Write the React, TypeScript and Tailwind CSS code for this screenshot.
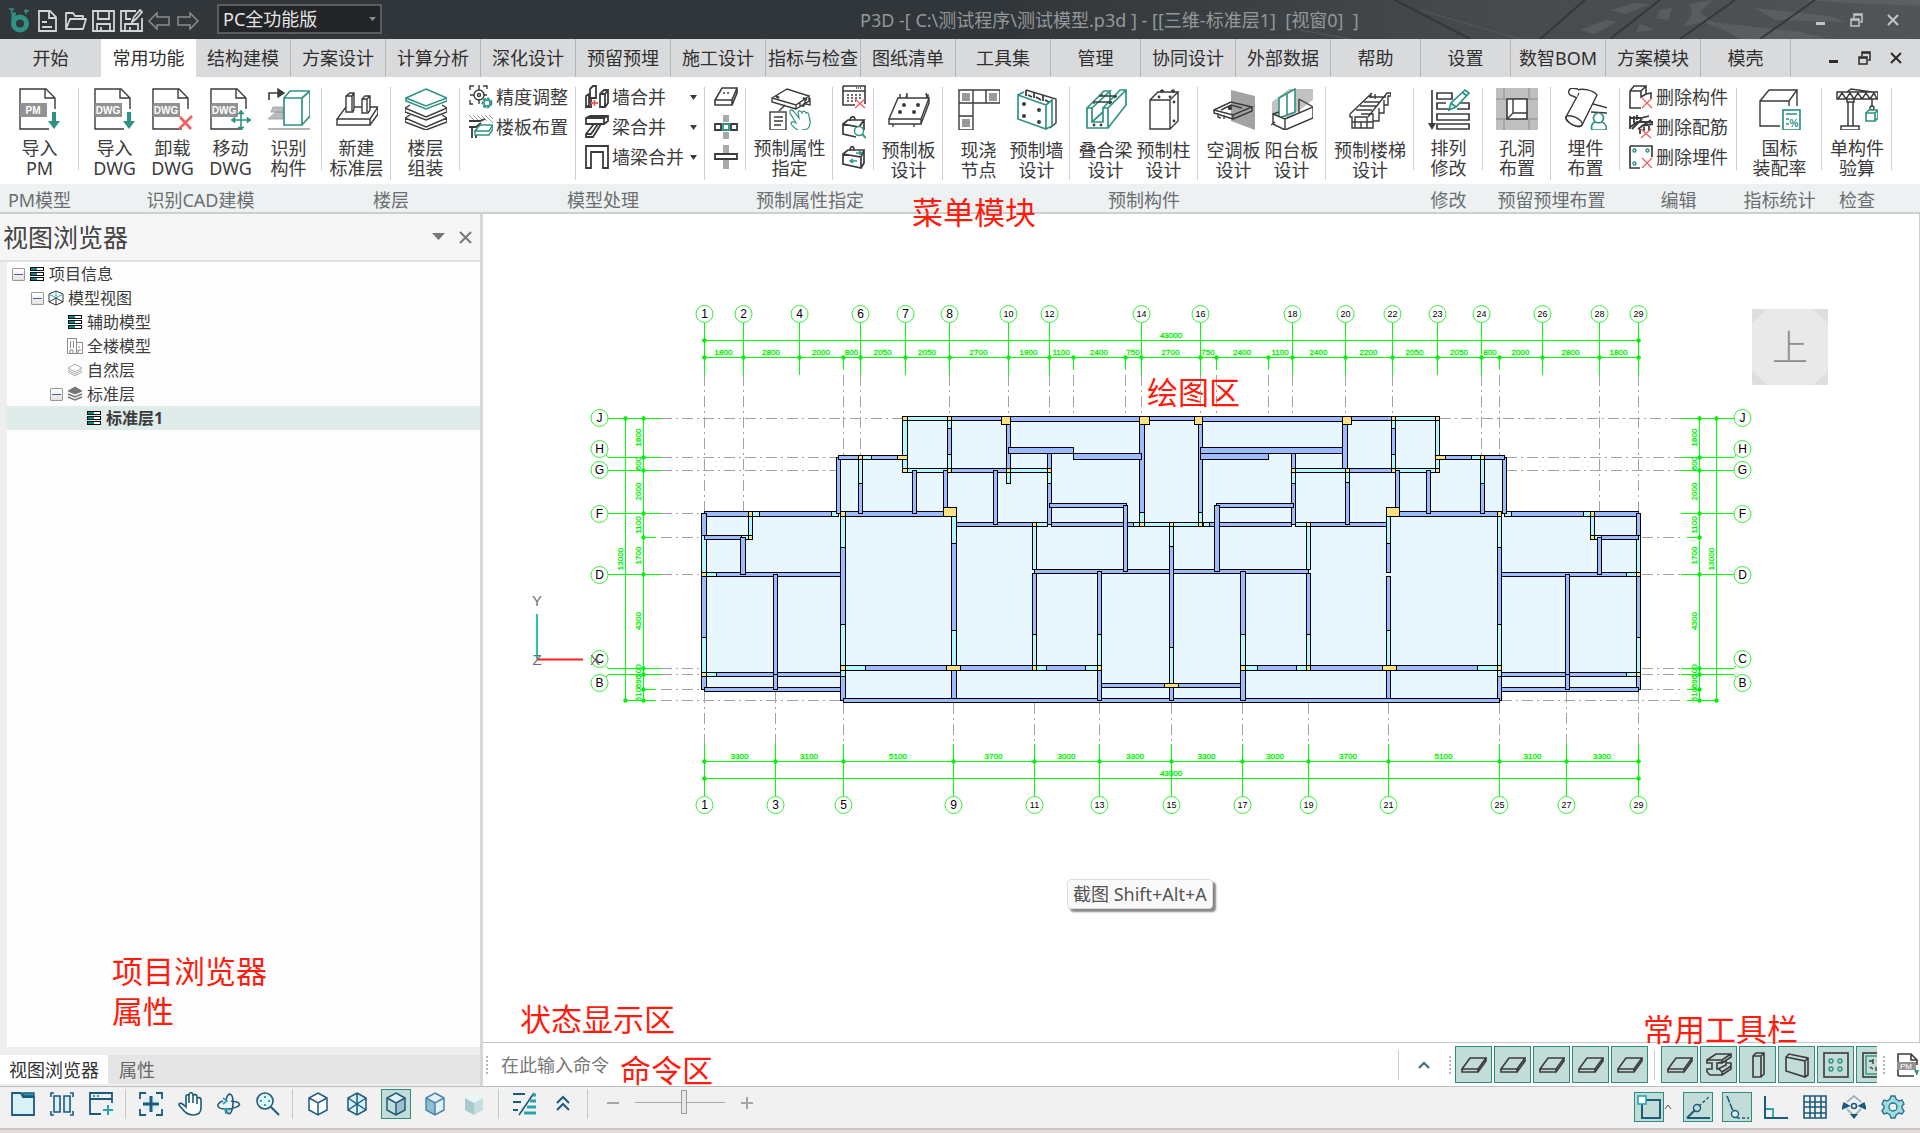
import React from "react";

const D = "#3b3b3b";
const T = "#2e9384";
const G = "#9b9b9b";
const N = "#1d5a7c";
const C = "#25a5b0";
const R = "#f0605c";

function Svg({ s = 42, children, className = "" }: { s?: number; children: React.ReactNode; className?: string }) {
  return (
    <svg width={s} height={s} viewBox={`0 0 ${s} ${s}`} fill="none" stroke={D} strokeWidth={1.4} className={`shrink-0 ${className}`} aria-hidden="true">
      {children}
    </svg>
  );
}

/* ---------- large ribbon icons, 42 x 42 ---------- */

function Doc({ tag, children }: { tag: string; children: React.ReactNode }) {
  return (
    <Svg>
      <path d="M36 21V10L27 1H1V41H30M26 1V10H36" />
      <rect x="1" y="15" width="27" height="14" fill="#929292" stroke="none" />
      <text x="14" y="26" textAnchor="middle" fontSize="10" fontWeight="700" fill="#fff" stroke="none" fontFamily="Liberation Sans, sans-serif">{tag}</text>
      {children}
    </Svg>
  );
}
const downArrow = <path d="M33 24H37V33H41L35 41L29 33H33Z" fill={T} stroke="none" />;

const big: Record<string, React.ReactNode> = {
  pm: <Doc tag="PM">{downArrow}</Doc>,
  dwgIn: <Doc tag="DWG">{downArrow}</Doc>,
  dwgOut: <Doc tag="DWG"><path d="M28 29L39 41M40 28L27 41" stroke={R} strokeWidth={2.6} /></Doc>,
  dwgMove: (
    <Doc tag="DWG">
      <g stroke={T} strokeWidth={1.6}>
        <path d="M31 23V42M22 32H41" />
        <path d="M28 26L31 22L34 26ZM28 39L31 43L34 39ZM25 29L21 32L25 35ZM37 29L41 32L37 35Z" fill={T} strokeWidth={0.6} />
      </g>
    </Doc>
  ),
  recog: (
    <Svg>
      <path d="M1 12V5H11" strokeWidth={1.6} />
      <path d="M10 1L16 5L10 9Z" fill={D} />
      <path d="M5 19H15V24H3ZM8 24H15V31H0Z" fill="#bcbcbc" stroke={G} strokeWidth={0.8} />
      <path d="M0 41H42" stroke={G} />
      <g stroke={T} strokeWidth={1.7}>
        <path d="M16 10H34V37H16ZM16 10L22 3H42V28L34 37M34 10L42 3" fill="#fff" />
      </g>
    </Svg>
  ),
  newFloor: (
    <Svg>
      <path d="M10 19H42L34 31H1ZM1 31V37H34V31M34 37L42 26V19" />
      <path d="M10 8L14 5H18V21L17 24H10ZM10 8H16V23M16 8L18 5M26 11L29 8H34V22L32 25H26ZM26 11H31V24M31 11L34 8" fill="#fff" />
    </Svg>
  ),
  floors: (
    <Svg>
      <path d="M5 27L0 30L21 39L42 30L37 27M0 30V34L21 42L42 34V30" />
      <path d="M5 17L0 20L21 29L42 20L37 17M0 20V24L21 32L42 24V20" />
      <g stroke={T} strokeWidth={1.6}>
        <path d="M21 1L42 10L21 18L1 10ZM1 10V13L21 21L42 13V10" fill="#fff" />
      </g>
    </Svg>
  ),
  assign: (
    <Svg>
      <path d="M3 10L18 1L40 8L27 17ZM3 10V14L27 21V17M27 21L40 13V8M31 14V18H35V15M36 12V16L41 17V10" />
      <path d="M7 8L10 10M34 10L38 12" strokeWidth={2.4} />
      <path d="M16 17L10 23" />
      <rect x="1" y="24" width="16" height="18" />
      <path d="M5 29H14M5 33H14M5 37H12" />
      <path d="M21 23C22 21 24 22 26 25L30 30L29 24C30 22 32 23 33 25C34 22 36 23 37 25C38 24 40 25 40 28C42 34 42 38 38 41L30 43C26 40 22 38 22 35C22 33 25 34 27 35L21 25Z" stroke={T} strokeWidth={1.2} />
    </Svg>
  ),
  slab: (
    <Svg>
      <path d="M10 10H41L33 31H1ZM1 31V36H33V31M33 36L41 15V10M12 10V6M19 10V5M40 10V6M5 36V39M26 36V39M18 10L19 6M39 10L38 5" />
      <g fill={D} stroke="none">
        <circle cx="16" cy="17" r="2" /><circle cx="30" cy="17" r="2" /><circle cx="12" cy="24" r="2" /><circle cx="26" cy="24" r="2" />
      </g>
    </Svg>
  ),
  node: (
    <Svg>
      <path d="M1 2H42V15H1ZM15 2V42H1V2M28 2V15M1 28H15" />
      <g fill="#999" stroke="none"><rect x="4" y="5" width="8" height="8" /><rect x="31" y="5" width="8" height="8" /><rect x="4" y="31" width="8" height="8" /></g>
    </Svg>
  ),
  wall: (
    <Svg>
      <path d="M10 2L40 11V35L34 40" />
      <path d="M10 2V8M18 4V10M27 7V13M12 7L16 9M20 9L25 12M29 12L33 14" strokeWidth={1.8} />
      <path d="M2 7L30 17V41L2 31ZM2 7L8 4M30 17L36 12V38L30 41" stroke={T} strokeWidth={1.7} />
      <g fill={D} stroke="none"><circle cx="8" cy="16" r="2" /><circle cx="8" cy="28" r="2" /><circle cx="23" cy="22" r="2" /><circle cx="23" cy="34" r="2" /></g>
    </Svg>
  ),
  beam: (
    <Svg>
      <g stroke={T} strokeWidth={1.7}>
        <path d="M2 20H7V34H18V20H23V40H2ZM2 20L19 3H25L7 20M18 20L35 2H41L23 20M41 2V17L23 40M25 3V16M7 34L18 24" />
      </g>
      <path d="M14 8H32M17 8V6M10 14H27M9 16V13M29 10L32 8M24 16L27 14" />
      <g fill={D} stroke="none"><circle cx="9" cy="37" r="1.4" /><circle cx="16" cy="37" r="1.4" /></g>
    </Svg>
  ),
  column: (
    <Svg>
      <path d="M7 12H27V41H7ZM7 12L15 4H35L27 12M35 4V33L27 41M19 5V1M30 5V1M17 3H21M28 3H32" />
      <g fill={D} stroke="none"><circle cx="16" cy="9" r="1.4" /><circle cx="27" cy="9" r="1.4" /><circle cx="31" cy="14" r="1.4" /><circle cx="31" cy="33" r="1.4" /></g>
    </Svg>
  ),
  acSlab: (
    <Svg>
      <path d="M18 2L42 8V42L18 33Z" fill="#a3a3a3" stroke="none" />
      <path d="M1 22L18 14L39 19L20 27ZM1 22V25L20 31V27M20 31L39 23V19M5 25V29L8 30M11 27V31M8 22L18 17L29 20" />
      <circle cx="17" cy="20" r="1.5" fill={D} />
    </Svg>
  ),
  balcony: (
    <Svg>
      <path d="M1 14L18 1H42V12L18 30L1 26Z" fill="#c2c2c2" stroke="none" />
      <path d="M8 10L24 1V24L8 30ZM16 6V27" fill="#fff" stroke={T} strokeWidth={1.6} />
      <path d="M2 26L14 31V42L2 36ZM14 31L42 19V30L14 42M28 11L42 19M28 11V25M2 26L8 24M0 37L4 34" fill="#fff" />
    </Svg>
  ),
  stairs: (
    <Svg>
      <path d="M1 26L23 5M1 26V29H3V40H24V33H30V25H35V17H39V8H42V5H38L19 29M7 22H23M11 18H27M15 14H31M20 9H37M22 5V10M26 6V11M3 34H18V29H6V40M12 34V40M18 34V40M18 34H24M24 33V26H12M30 25V20M35 17V12" />
    </Svg>
  ),
  arrange: (
    <Svg>
      <path d="M4 2V38" strokeWidth={1.7} /><path d="M0 35H8L4 42Z" fill={D} stroke="none" />
      <path d="M9 5H24V11H9ZM18 15H9V21H21M32 15H41V21H29M9 26H41V32H9ZM9 36H41V41H9Z" strokeWidth={1.7} />
      <path d="M21 22L23 15L37 2L41 5L28 19ZM34 4L39 8M23 15L28 19" fill="#fff" stroke={T} strokeWidth={1.7} />
    </Svg>
  ),
  hole: (
    <Svg>
      <path d="M0 0H42V42H0Z" fill="#bfbfbf" stroke="none" />
      <path d="M0 11H42M0 31H42M8 0V11M33 0V11M8 31V42M33 31V42" stroke="#8c8c8c" strokeWidth={1} />
      <path d="M11 11H31V31H11Z" fill="#fff" strokeWidth={1.6} /><path d="M17 11V25L11 31M17 25H31" />
    </Svg>
  ),
  embed: (
    <Svg>
      <path d="M28 16L43 20V25L26 24" fill="#fff" />
      <path d="M12 2C18 0 28 2 32 7L17 37C13 42 1 34 1 29L14 5" fill="#fff" /><ellipse cx="9" cy="33" rx="9" ry="4" transform="rotate(25 9 33)" />
      <path d="M13 1L7 0C3 1 3 5 5 7L12 10" fill="#fff" />
      <path d="M34 25A5 5 0 1 1 33 25M30 34C26 36 26 39 27 42H41C42 39 41 36 37 34" fill="#fff" stroke={T} strokeWidth={1.7} />
    </Svg>
  ),
  national: (
    <Svg>
      <path d="M1 13L10 2H38L30 13H1V38H21M30 13V18M38 2V18" />
      <rect x="24" y="22" width="17" height="20" stroke={T} strokeWidth={1.7} fill="#fff" />
      <path d="M27 26H38M27 31H30M27 36H30" stroke={T} />
      <text x="35" y="39" fontSize="10" fontWeight="700" textAnchor="middle" fill={T} stroke="none" fontFamily="Liberation Sans, sans-serif">%</text>
    </Svg>
  ),
  crane: (
    <Svg>
      <path d="M1 4H42V11H1ZM11 4L15 1L36 4M2 11L6 5L10 11L14 5L18 11L22 5L26 11L30 5L34 11L38 5L41 11M11 11V14H18V11M12 14V38M17 14V38M5 38H23V42H5ZM36 11V19" strokeWidth={1.5} />
      <circle cx="36" cy="20" r="2" />
      <path d="M30 25H39V33H30ZM30 25L33 22H42V30L39 33M39 25L42 22" fill="#fff" stroke={T} strokeWidth={1.7} />
    </Svg>
  ),
};

/* ---------- small ribbon icons, 24 x 24 ---------- */

const slabPath = "M8 3H23L18 15H1ZM1 15V20H18V15M18 20L23 8V3";
const small: Record<string, React.ReactNode> = {
  precision: (
    <Svg s={24}>
      <path d="M1 5V1H5M14 1H18V4M1 15V19H4M10 0V5M10 14V19M1 10H5M15 10H18" />
      <circle cx="10" cy="10" r="5" /><circle cx="10" cy="10" r="1.5" />
      <circle cx="18" cy="18" r="4.4" stroke={T} strokeWidth={2} fill="#fff" strokeDasharray="3 1" /><circle cx="18" cy="18" r="3" stroke={T} />
    </Svg>
  ),
  floorSlab: (
    <Svg s={24}>
      <path d="M0 0L5 5M4 0L9 5M8 0L13 5M12 0L18 6M16 0L24 8M20 0L24 4" stroke={G} strokeWidth={1} />
      <path d="M0 6H11L16 4M0 12H3V23M7 14V23M3 12H7L12 8" strokeWidth={1.8} />
      <path d="M11 10H24L20 16H6ZM6 16V20H20L24 14V10" stroke={T} fill="#fff" />
    </Svg>
  ),
  wallMerge: (
    <Svg s={24}>
      <path d="M5 4L8 1H11V13H5ZM1 11L4 9V20L1 22ZM1 11V22H6V13M15 9L19 5H23V18L20 22H15ZM15 9H20V22M20 9L23 5" strokeWidth={1.8} />
      <path d="M6 18H13M9.500 15V21" stroke={R} strokeWidth={1.8} />
    </Svg>
  ),
  beamMerge: (
    <Svg s={24}>
      <path d="M1 3L5 1H23V6L19 9H16L8 22H1V19L9 9H1ZM1 3H19L23 1M19 3V9M9 9H16M1 19H6L13 9" strokeWidth={1.8} />
    </Svg>
  ),
  wallBeam: <Svg s={24}><path d="M1 1H23V23H18V7H6V23H1Z" strokeWidth={1.8} /></Svg>,
  s1: <Svg s={24}><path d={slabPath} strokeWidth={1.6} /><path d="M9 8H17" strokeDasharray="2 2" /></Svg>,
  s2: (
    <Svg s={24}>
      <path d="M9 0H15V7H9ZM9 17H15V24H9Z" fill="#aaa" stroke="none" />
      <path d="M1 9H7V15H1ZM17 9H23V15H17Z" strokeWidth={1.8} /><path d="M9 9H15V15H9Z" stroke={T} strokeWidth={1.8} />
    </Svg>
  ),
  s3: <Svg s={24}><path d="M9 0H15V24H9Z" fill="#aaa" stroke="none" /><path d="M1 9H23V14H1Z" fill="#fff" strokeWidth={1.8} /></Svg>,
  calX: (
    <Svg s={24}>
      <path d="M1 1H23V19M1 1V20H13M1 6H23" strokeWidth={1.6} />
      <path d="M5 10H20M5 13H20M5 16H14" strokeDasharray="2 2" /><path d="M14 3H20" strokeDasharray="1 1" />
      <path d="M13 14L23 23M23 14L13 23" stroke={R} strokeWidth={1.4} />
    </Svg>
  ),
  boxFind: (
    <Svg s={24}>
      <path d="M1 9L6 5H22L17 12ZM1 9V19L14 22M1 9L17 12M22 5V15M8 6C8 1 13 0 13 5" strokeWidth={1.7} />
      <circle cx="17" cy="16" r="4.500" stroke={T} fill="#fff" /><path d="M20 19L24 23" stroke={T} strokeWidth={1.8} />
    </Svg>
  ),
  boxSwap: (
    <Svg s={24}>
      <path d="M1 9L6 5H22L19 12ZM1 9V19L19 23V12M22 5V18L19 23M8 6C8 1 12 0 12 5" strokeWidth={1.7} />
      <path d="M14 8H20M8 16H15M17 6L20 8L17 10M11 14L8 16L11 18" stroke={T} />
    </Svg>
  ),
  delPart: (
    <Svg s={24}>
      <path d="M1 6L5 1H17V9L22 8V14M1 6H12L17 1M12 6V12L17 9M1 6V23H12" strokeWidth={1.6} />
      <path d="M13 13L23 23M23 13L13 23" stroke={R} strokeWidth={1.3} />
    </Svg>
  ),
  delRebar: (
    <Svg s={24}>
      <path d="M0 13L8 7H24M3 14L13 4M9 14L22 5M12 11L24 9M1 1V14M5 1V8M8 0V5M1 3H12L20 1M11 14V19M15 12V16M20 11V16" strokeWidth={1.8} />
      <path d="M12 14L22 23M22 14L12 23" stroke={R} strokeWidth={1.3} />
    </Svg>
  ),
  delEmbed: (
    <Svg s={24}>
      <path d="M1 1H23V12M1 1V23H11" strokeWidth={1.7} />
      <g stroke={T}><circle cx="5.500" cy="5.500" r="1.500" /><circle cx="18.500" cy="5.500" r="1.500" /><circle cx="5.500" cy="18.500" r="1.500" /></g>
      <path d="M13 13L23 23M23 13L13 23" stroke={R} strokeWidth={1.3} />
    </Svg>
  ),
};

/* ---------- ribbon ---------- */

function Big({ icon, a, b, w, low }: { icon: string; a: string; b: string; w: string; low?: boolean }) {
  return (
    <button type="button" className={`flex h-full flex-col items-center pt-[11px] pl-px ${w} ${low ? "gap-2.5" : "gap-2"}`}>
      {big[icon]}
      <span className="flex flex-col whitespace-nowrap text-center text-lg leading-5"><span>{a}</span><span>{b}</span></span>
    </button>
  );
}

function Small({ icon, label, menu }: { icon: string; label?: string; menu?: boolean }) {
  return (
    <button type="button" aria-label={label ?? icon} className="flex h-[30px] w-full items-center gap-[3px] text-lg leading-6">
      {small[icon]}
      {label && <span className="whitespace-nowrap">{label}</span>}
      {menu && <svg width="7" height="5" className="ml-auto" aria-hidden="true"><path d="M0 0H7L3.500 5Z" fill={D} /></svg>}
    </button>
  );
}

const Stack = ({ w, children }: { w: string; children: React.ReactNode }) => (
  <div className={`flex flex-col pt-[5px] pl-[9px] ${w}`}>{children}</div>
);
const Sep = () => <div className="mt-[11px] h-[82px] w-px bg-[#cfcfcf]" />;
const SepTall = () => <div className="mt-[10px] h-[93px] w-px bg-[#cfcfcf]" />;

function Group({ label, children }: { label: string; children: React.ReactNode }) {
  return (
    <section aria-label={label} className="flex shrink-0 flex-col">
      <div className="flex h-[107px]">{children}</div>
      <div className="flex h-7 items-center justify-center bg-[#edf1f2] pt-1 text-lg leading-6 text-[#6b6e70]">{label}</div>
    </section>
  );
}

function Ribbon() {
  return (
    <div className="flex overflow-hidden border-b-2 border-[#cdd0d0] bg-white text-[#3b3b3b]">
      <Group label="PM模型"><Big icon="pm" a="导入" b="PM" w="w-[78px]" /><Sep /></Group>
      <Group label="识别CAD建模">
        <div className="flex pr-1 pl-1.5">
          <Big icon="dwgIn" a="导入" b="DWG" w="w-[58px]" />
          <Big icon="dwgOut" a="卸载" b="DWG" w="w-[58px]" />
          <Big icon="dwgMove" a="移动" b="DWG" w="w-[58px]" />
          <Big icon="recog" a="识别" b="构件" w="w-[58px]" />
        </div>
        <Sep />
      </Group>
      <Group label="楼层">
        <Big icon="newFloor" a="新建" b="标准层" w="w-[68px]" /><SepTall />
        <Big icon="floors" a="楼层" b="组装" w="w-[68px]" /><Sep />
      </Group>
      <Group label="模型处理">
        <Stack w="w-[115px]"><Small icon="precision" label="精度调整" /><Small icon="floorSlab" label="楼板布置" /></Stack>
        <SepTall />
        <Stack w="w-[128px] pr-[7px]"><Small icon="wallMerge" label="墙合并" menu /><Small icon="beamMerge" label="梁合并" menu /><Small icon="wallBeam" label="墙梁合并" menu /></Stack>
        <SepTall />
        <Stack w="w-[40px]"><Small icon="s1" /><Small icon="s2" /><Small icon="s3" /></Stack>
        <Sep />
      </Group>
      <Group label="预制属性指定">
        <Big icon="assign" a="预制属性" b="指定" w="w-[86px]" /><SepTall />
        <Stack w="w-[40px]"><Small icon="calX" /><Small icon="boxFind" /><Small icon="boxSwap" /></Stack>
        <Sep />
      </Group>
      <Group label="预制构件">
        <Big icon="slab" a="预制板" b="设计" w="w-[68px]" low /><SepTall />
        <div className="flex pr-1 pl-1.5">
          <Big icon="node" a="现浇" b="节点" w="w-[58px]" low /><Big icon="wall" a="预制墙" b="设计" w="w-[58px]" low />
        </div>
        <SepTall />
        <div className="flex pr-[5px] pl-1.5">
          <Big icon="beam" a="叠合梁" b="设计" w="w-[58px]" low /><Big icon="column" a="预制柱" b="设计" w="w-[58px]" low />
        </div>
        <SepTall />
        <div className="flex pr-[5px] pl-1.5">
          <Big icon="acSlab" a="空调板" b="设计" w="w-[58px]" low /><Big icon="balcony" a="阳台板" b="设计" w="w-[58px]" low />
        </div>
        <SepTall />
        <Big icon="stairs" a="预制楼梯" b="设计" w="w-[87px]" low /><Sep />
      </Group>
      <Group label="修改"><Big icon="arrange" a="排列" b="修改" w="w-[68px]" /><Sep /></Group>
      <Group label="预留预埋布置">
        <Big icon="hole" a="孔洞" b="布置" w="w-[67px]" /><SepTall />
        <Big icon="embed" a="埋件" b="布置" w="w-[68px]" /><Sep />
      </Group>
      <Group label="编辑">
        <Stack w="w-[116px]"><Small icon="delPart" label="删除构件" /><Small icon="delRebar" label="删除配筋" /><Small icon="delEmbed" label="删除埋件" /></Stack>
        <Sep />
      </Group>
      <Group label="指标统计"><Big icon="national" a="国标" b="装配率" w="w-[84px]" /><Sep /></Group>
      <Group label="检查"><Big icon="crane" a="单构件" b="验算" w="w-[69px]" /><Sep /></Group>
      <div className="flex flex-1 flex-col justify-end"><div className="h-7 bg-[#edf1f2]" /></div>
    </div>
  );
}

/* ---------- title bar and tabs ---------- */

function WindowButtons({ color, className }: { color: string; className: string }) {
  return (
    <div className={`flex items-center ${className}`}>
      <button type="button" aria-label="最小化"><svg width="14" height="14" aria-hidden="true"><path d="M2 9H11V12H2Z" fill={color} /></svg></button>
      <button type="button" aria-label="还原">
        <svg width="14" height="14" fill="none" stroke={color} strokeWidth="1.500" aria-hidden="true"><path d="M1 6H9V13H1ZM4 5V1H12V9H10M1 7H9M4 2H12" /></svg>
      </button>
      <button type="button" aria-label="关闭"><svg width="14" height="14" stroke={color} strokeWidth="2" aria-hidden="true"><path d="M2 2L12 12M12 2L2 12" /></svg></button>
    </div>
  );
}

function TitleBar() {
  const l = "#d3d5d6";
  return (
    <header className="relative flex h-[39px] shrink-0 items-center bg-[#31363a]">
      <div className="absolute inset-y-0 right-0 w-[920px] overflow-hidden bg-linear-to-r from-[#31363a] via-[#45494c] via-50% to-[#515558]">
        <svg width="920" height="39" aria-hidden="true">
          <g fill="#65696c" opacity=".55">
            <path d="M755 8L830 16L845 22L775 20Z" /><path d="M710 22L800 32L830 39H740Z" />
            <path d="M660 10L672 8L668 20L656 18Z" /><path d="M690 4L712 0L700 12L722 30L704 22L684 26L692 14Z" />
            <path d="M610 10L636 3L650 4L625 14Z" /><path d="M580 30L606 20L616 22L595 34Z" /><path d="M805 0H920V6L850 3Z" /><path d="M640 24L655 30L636 32Z" />
          </g>
          <g stroke="#34383b" strokeWidth="2" fill="none"><path d="M540 39L585 0M610 39L660 0M680 39L735 0M760 39L815 0M395 0L470 39" /></g>
          <path d="M300 30L350 39M420 10L520 39" stroke="#54585b" />
        </svg>
      </div>
      <div className="relative flex items-center pl-2 pt-[3px]">
        <svg width="24" height="26" fill="none" aria-hidden="true">
          <circle cx="12" cy="15.500" r="6.500" stroke={T} strokeWidth="5" /><path d="M5 14V6H8" stroke={T} strokeWidth="3" /><path d="M1 1H5L3 5M18 1V6M16 3H21" stroke={T} strokeWidth="1.500" />
        </svg>
        <div className="ml-1 flex gap-1">
          <button type="button" aria-label="新建"><Svg s={24}><path d="M3 2H14L20 8V22H3ZM13 2V9H20M6 13H11M6 18H16" stroke={l} strokeWidth={1.8} /></Svg></button>
          <button type="button" aria-label="打开"><Svg s={24}><path d="M2 20V4H9L11 7H19V10M2 20L6 10H22L19 20Z" stroke={l} strokeWidth={1.8} strokeLinejoin="round" /></Svg></button>
          <button type="button" aria-label="保存"><Svg s={24}><path d="M1 2H22V22H1ZM6 2V10H17V2M5 22V15H18V22M9 18V22" stroke={l} strokeWidth={1.8} /></Svg></button>
          <button type="button" aria-label="另存为"><Svg s={24}><path d="M16 2H1V22H22V9M6 2V10H11M5 22V15H18V22M10 18V22M12 13L14 8L20 1L22 3L16 10Z" stroke={l} strokeWidth={1.8} /></Svg></button>
          <button type="button" aria-label="撤销"><Svg s={24}><path d="M1 12L9 4V8H21V16H9V20Z" stroke="#8b8f91" strokeWidth={1.5} /></Svg></button>
          <button type="button" aria-label="重做"><Svg s={24}><path d="M22 12L14 4V8H2V16H14V20Z" stroke="#8b8f91" strokeWidth={1.5} /></Svg></button>
        </div>
      </div>
      <div className="relative -mt-0.5 ml-[17px] h-[30px] w-[165px]">
        <select aria-label="版本" className="h-full w-full appearance-none border-2 border-[#5a5d60] bg-[#232527] pl-1 text-lg leading-6 text-[#e3e4e5]"><option>PC全功能版</option></select>
        <svg width="7" height="5" className="pointer-events-none absolute top-[13px] right-[6px]" aria-hidden="true"><path d="M0 0H7L3.500 4Z" fill="#8a8d8f" /></svg>
      </div>
      <h1 className="relative ml-[478px] whitespace-pre text-lg leading-6 text-[#94989a]">P3D -[ C:\测试程序\测试模型.p3d ] - [[三维-标准层1]  [视窗0]  ]</h1>
      <WindowButtons color="#c3c5c6" className="relative ml-auto gap-[22px] pr-5" />
    </header>
  );
}

const tabs: [string, string][] = [
  ["开始", "w-[101px]"], ["常用功能", "w-[95px]"], ["结构建模", "w-[95px]"], ["方案设计", "w-[95px]"], ["计算分析", "w-[95px]"],
  ["深化设计", "w-[95px]"], ["预留预埋", "w-[95px]"], ["施工设计", "w-[95px]"], ["指标与检查", "w-[95px]"], ["图纸清单", "w-[95px]"],
  ["工具集", "w-[95px]"], ["管理", "w-[90px]"], ["协同设计", "w-[95px]"], ["外部数据", "w-[95px]"], ["帮助", "w-[90px]"],
  ["设置", "w-[90px]"], ["数智BOM", "w-[95px]"], ["方案模块", "w-[95px]"], ["模壳", "w-[90px]"],
];

function TabBar() {
  return (
    <nav className="flex h-[38px] shrink-0 bg-[#d9dadc] text-[#2f2f2f]">
      <div role="tablist" className="flex">
        {tabs.map(([t, w], i) => (
          <button key={t} type="button" role="tab" aria-selected={i === 1}
            className={`flex shrink-0 items-center justify-center overflow-hidden whitespace-nowrap text-lg leading-6 ${w} ${i === 1 ? "bg-white" : i > 1 ? "border-r border-[#b5b6b8]" : ""}`}>
            {t}
          </button>
        ))}
      </div>
      <WindowButtons color="#2b2b2b" className="ml-auto gap-[17px] pr-[17px]" />
    </nav>
  );
}

/* ---------- project browser ---------- */

const ListIcon = () => (
  <svg width="16" height="16" aria-hidden="true">
    {[1, 6, 11].map((y) => (<g key={y}><rect x="1" y={y} width="14" height="4" fill="#111" /><rect x="2" y={y + 1} width="6" height="2" fill="#0c8a86" /><rect x="8" y={y + 1} width="6" height="2" fill="#fff" /></g>))}
  </svg>
);
const treeIcons: Record<string, React.ReactNode> = {
  list: <ListIcon />,
  cube: <svg width="16" height="16" fill="none" stroke="#333" aria-hidden="true"><path d="M8 1L15 4V12L8 15L1 12V4ZM8 8V15M1 12L8 8L15 12" /><path d="M1 4L8 8L15 4M8 1V8" stroke="#2aa5a0" /></svg>,
  build: <svg width="16" height="16" fill="none" stroke="#8a8a8a" aria-hidden="true"><path d="M.5 15.500V.5H9.500V15.500M9.500 4.500H15.500V15.500H.5M3.500 3V10M6.500 3V10M12 8V10M3 15V12H6V15M11 15V12H14" /></svg>,
  layers: <svg width="16" height="16" fill="none" stroke="#aaa" aria-hidden="true"><path d="M8 2L15 6L8 10L1 6ZM1 8L8 12L15 8M1 10L8 14L15 10" /></svg>,
  layersSolid: <svg width="16" height="16" fill="none" stroke="#777" aria-hidden="true"><path d="M8 1L15 5L8 8L1 5Z" fill="#777" /><path d="M1 8L8 11L15 8M1 11L8 14L15 11" strokeWidth="1.500" /></svg>,
};
const tree: { t: string; icon: string; open?: boolean; pad: string; sel?: boolean }[] = [
  { t: "项目信息", icon: "list", open: true, pad: "pl-[5px]" },
  { t: "模型视图", icon: "cube", open: true, pad: "pl-6" },
  { t: "辅助模型", icon: "list", pad: "pl-[60px]" },
  { t: "全楼模型", icon: "build", pad: "pl-[60px]" },
  { t: "自然层", icon: "layers", pad: "pl-[60px]" },
  { t: "标准层", icon: "layersSolid", open: true, pad: "pl-[43px]" },
  { t: "标准层1", icon: "list", pad: "pl-[79px]", sel: true },
];

function Browser() {
  return (
    <aside className="flex w-[480px] shrink-0 flex-col bg-[#eeeeee]">
      <div className="flex h-[46px] items-center bg-[#f6f6f6] pr-[7px] pl-[3px]">
        <h2 className="text-[25px] leading-8 text-[#444]">视图浏览器</h2>
        <button type="button" aria-label="菜单" className="ml-auto"><svg width="13" height="8" aria-hidden="true"><path d="M0 0H13L6.500 7Z" fill="#777" /></svg></button>
        <button type="button" aria-label="关闭" className="ml-[14px]"><svg width="14" height="14" stroke="#777" strokeWidth="2" aria-hidden="true"><path d="M1 2L12 13M12 2L1 13" /></svg></button>
      </div>
      <div className="h-0.5 bg-[#e0e0e0]" />
      <div className="relative ml-[7px] flex-1 bg-[#fdfdfd]">
        <ul role="tree" className="text-base leading-6 text-[#3c3c3c]">
          {tree.map((n) => (
            <li key={n.t} role="treeitem" aria-selected={!!n.sel} className={`flex h-6 items-center ${n.pad} ${n.sel ? "bg-[#dfece9] font-bold" : ""}`}>
              {n.open && (
                <button type="button" aria-label="折叠" className="mr-1 flex size-[13px] items-center justify-center rounded-[1px] border border-[#999] bg-linear-to-b from-white to-[#e2e2e2]"><span className="h-px w-[9px] bg-[#4560a8]" /></button>
              )}
              {treeIcons[n.icon]}
              <span className="ml-1">{n.t}</span>
            </li>
          ))}
        </ul>
        <p className="absolute bottom-4 left-[105px] text-[31px] leading-10 text-[#ff1c0e]">项目浏览器<br />属性</p>
      </div>
      <div role="tablist" className="mt-2 mb-0.5 flex h-[29px] bg-[#e5e5e5] text-lg leading-6">
        <button type="button" role="tab" aria-selected="true" className="w-[108px] bg-white text-[#333]">视图浏览器</button>
        <button type="button" role="tab" aria-selected="false" className="w-[58px] text-[#666]">属性</button>
      </div>
    </aside>
  );
}

/* ---------- floor plan ---------- */

type Seg = [number, number, number, number, "b" | "c" | "y"];
const colors = { b: "#9dbbff", c: "#b0f7ff", y: "#ffe182" };

const side: Seg[] = [
  [704, 511, 748, 516, "b"], [748, 511, 752, 516, "y"], [752, 511, 759, 516, "c"], [759, 511, 831, 516, "b"], [831, 511, 838, 516, "c"],
  [701, 513, 706, 535, "b"], [701, 535, 706, 572, "c"], [701, 576, 706, 637, "b"], [701, 637, 706, 672, "c"], [701, 676, 706, 689, "b"],
  [701, 572, 706, 576, "y"], [701, 672, 706, 676, "y"],
  [704, 535, 741, 539, "b"], [741, 535, 748, 539, "c"], [748, 535, 752, 539, "y"], [748, 516, 752, 535, "c"],
  [706, 572, 716, 576, "c"], [716, 572, 843, 576, "b"], [740, 537, 745, 574, "b"],
  [706, 672, 716, 676, "c"], [716, 672, 843, 676, "b"], [704, 687, 843, 691, "b"],
  [773, 574, 777, 675, "b"], [773, 674, 777, 689, "b"],
  [840, 511, 845, 516, "y"], [840, 516, 845, 547, "c"], [840, 547, 845, 624, "b"], [840, 624, 845, 665, "c"], [840, 665, 845, 670, "y"], [840, 670, 845, 676, "c"], [840, 676, 845, 700, "b"],
  [845, 511, 943, 516, "b"], [836, 457, 840, 513, "b"],
  [838, 455, 858, 459, "b"], [858, 455, 862, 459, "y"], [862, 455, 871, 459, "c"], [871, 455, 897, 459, "b"],
  [858, 459, 862, 483, "c"], [858, 483, 862, 513, "b"],
  [902, 420, 907, 468, "c"], [897, 455, 907, 459, "y"], [902, 416, 907, 420, "y"], [902, 468, 907, 472, "y"],
  [907, 416, 947, 420, "c"], [947, 416, 951, 420, "y"], [947, 420, 951, 428, "c"], [947, 428, 951, 454, "b"], [947, 454, 951, 468, "c"], [947, 468, 951, 472, "y"],
  [907, 468, 947, 472, "c"], [912, 470, 916, 513, "b"], [943, 470, 947, 507, "b"],
  [953, 522, 1032, 526, "b"],
  [951, 516, 956, 543, "c"], [951, 630, 956, 665, "c"], [951, 670, 956, 700, "b"], [943, 507, 956, 516, "y"],
  [845, 665, 865, 670, "c"], [865, 665, 946, 670, "b"], [960, 665, 1032, 670, "b"], [946, 665, 960, 670, "y"],
  [1047, 450, 1051, 468, "b"], [1047, 472, 1051, 483, "c"],
  [1036, 522, 1047, 526, "c"], [1051, 522, 1133, 526, "b"], [1133, 522, 1139, 526, "c"], [1144, 522, 1169, 526, "c"], [1032, 522, 1036, 526, "y"],
  [1047, 483, 1051, 524, "b"], [1047, 468, 1051, 472, "y"],
  [1049, 503, 1126, 507, "b"], [1032, 526, 1036, 569, "c"], [1032, 573, 1036, 634, "b"], [1032, 634, 1036, 665, "c"], [1032, 665, 1036, 670, "y"],
  [1036, 665, 1046, 670, "c"], [1046, 665, 1085, 670, "b"], [1085, 665, 1097, 670, "c"],
  [1139, 512, 1144, 522, "c"], [1139, 522, 1144, 526, "y"], [1139, 424, 1144, 512, "b"],
  [1099, 683, 1164, 687, "b"],
];
const rest: Seg[] = [
  [1034, 569, 1308, 573, "b"], [843, 698, 1499, 702, "b"],
  [951, 543, 956, 630, "b"], [1386, 543, 1390, 572, "b"], [1386, 576, 1390, 630, "b"],
  [951, 416, 1001, 420, "b"], [1010, 416, 1139, 421, "b"], [1149, 416, 1194, 420, "b"], [1202, 416, 1343, 421, "b"], [1351, 416, 1391, 420, "b"],
  [951, 468, 1006, 472, "b"], [1010, 468, 1047, 472, "c"], [993, 470, 997, 524, "b"],
  [1006, 424, 1010, 468, "b"], [1006, 472, 1010, 483, "c"], [1006, 468, 1010, 472, "y"],
  [1008, 447, 1073, 453, "b"], [1073, 453, 1141, 459, "b"], [1200, 447, 1345, 453, "b"], [1200, 453, 1268, 459, "b"],
  [1342, 424, 1347, 470, "b"], [1295, 468, 1345, 472, "c"], [1349, 468, 1391, 472, "b"], [1345, 472, 1349, 482, "c"], [1345, 482, 1349, 524, "b"], [1345, 468, 1349, 472, "y"],
  [1001, 416, 1010, 424, "y"], [1139, 416, 1149, 424, "y"], [1194, 416, 1202, 424, "y"], [1342, 416, 1351, 424, "y"],
  [1123, 505, 1127, 571, "b"], [1214, 505, 1219, 571, "b"],
  [1097, 571, 1101, 634, "b"], [1097, 634, 1101, 665, "c"], [1097, 670, 1101, 700, "b"], [1097, 665, 1101, 670, "y"],
  [1240, 571, 1245, 634, "b"], [1240, 634, 1245, 665, "c"], [1240, 670, 1245, 700, "b"], [1240, 665, 1245, 670, "y"],
  [1169, 526, 1173, 546, "c"], [1169, 546, 1173, 647, "b"], [1169, 647, 1173, 683, "c"], [1169, 687, 1173, 700, "b"], [1169, 522, 1173, 526, "y"], [1164, 683, 1178, 687, "y"],
];
const mirrored = side.map(([a, b, c, d, k]): Seg => [2342 - c, b, c - a === 5 ? 2341 - a : 2342 - a, d, k]);
const walls: Seg[] = [...side, ...mirrored, ...rest];

const top: [number, string, string][] = [
  [704, "1", "1800"], [743, "2", "2800"], [799, "4", "2000"], [843, "", "800"], [860, "6", "2050"], [905, "7", "2050"], [949, "8", "2700"],
  [1008, "10", "1900"], [1049, "12", "1100"], [1073, "", "2400"], [1125, "", "750"], [1141, "14", "2700"], [1200, "16", "750"], [1216, "", "2400"],
  [1268, "", "1100"], [1292, "18", "2400"], [1345, "20", "2200"], [1392, "22", "2050"], [1437, "23", "2050"], [1481, "24", "800"], [1499, "", "2000"],
  [1542, "26", "2800"], [1599, "28", "1800"], [1638, "29", ""],
];
const bottom: [number, string, string][] = [
  [704, "1", "3300"], [775, "3", "3100"], [843, "5", "5100"], [953, "9", "3700"], [1034, "11", "3000"], [1099, "13", "3300"], [1171, "15", "3300"],
  [1242, "17", "3000"], [1308, "19", "3700"], [1388, "21", "5100"], [1499, "25", "3100"], [1566, "27", "3300"], [1638, "29", ""],
];
const rows: [number, string, number, string][] = [
  [418, "J", 418, "1800"], [457, "H", 449, "600"], [470, "G", 470, "2000"], [513, "F", 514, "1100"], [537, "", 0, "1700"], [574, "D", 575, "4300"],
  [668, "C", 659, "300"], [674, "B", 683, "690"], [689, "", 0, "510"], [700, "", 0, ""],
];
const topDash: [number, number][] = [
  [704, 511], [743, 511], [843, 455], [860, 455], [949, 416], [1008, 416], [1049, 416], [1073, 416], [1125, 416], [1141, 416], [1200, 416], [1216, 416],
  [1268, 416], [1292, 416], [1345, 416], [1392, 416], [1481, 455], [1499, 455], [1599, 511], [1638, 511],
];
const leftEnd = [902, 836, 836, 701, 701, 701, 701, 701, 701, 840];
const rightStart = [1440, 1506, 1506, 1681, 1642, 1642, 1642, 1642, 1642, 1501];

const dimText = { textAnchor: "middle" as const, fontSize: 8, fill: "#00f000", stroke: "#00f000", strokeWidth: 0.3, fontFamily: "'Liberation Sans Narrow', 'Liberation Sans', sans-serif" };

function Bubble({ x, y, t }: { x: number; y: number; t: string }) {
  return (
    <g>
      <circle cx={x + 0.5} cy={y} r={8.5} fill="#fff" stroke="#35f035" strokeWidth={1} />
      <text x={x + 0.5} y={y + (t.length > 1 ? 3 : 4)} textAnchor="middle" fontSize={t.length > 1 ? 9 : 12} fill="#000">{t}</text>
    </g>
  );
}
const Dot = ({ x, y }: { x: number; y: number }) => <circle cx={x + 0.5} cy={y + 0.5} r={2.2} fill="#00f000" />;

function HorizontalAxis({ data, up }: { data: [number, string, string][]; up: boolean }) {
  const dim = up ? 357 : 761;
  const all = up ? 340 : 778;
  return (
    <g>
      <path d={`M702 ${dim + 0.5}H1641M702 ${all + 0.5}H1641`} stroke="#00ff00" />
      {data.map(([x, t, d], i) => (
        <g key={x}>
          <path d={up ? `M${x + 0.5} ${t ? 322 : 357}V${t ? 375 : 370}` : `M${x + 0.5} 744V797`} stroke="#00ff00" />
          <Dot x={x} y={dim} />
          {(i === 0 || i === data.length - 1) && <Dot x={x} y={all} />}
          {t && <Bubble x={x} y={up ? 314 : 805} t={t} />}
          {d && <text x={(x + data[i + 1][0]) / 2} y={dim - 2} {...dimText}>{d}</text>}
        </g>
      ))}
      <text x={1171} y={all - 2} {...dimText}>43000</text>
    </g>
  );
}

function VerticalAxis({ left }: { left: boolean }) {
  const dim = left ? 643 : 1699;
  const all = left ? 625 : 1716;
  const cx = left ? 599 : 1742;
  const near = left ? 661 : 1681;
  const far = left ? 608 : 1734;
  const edge = left ? 606 : 1736;
  const short = left ? 656 : 1687;
  return (
    <g>
      <path d={`M${dim + 0.5} 416V702M${all + 0.5} 416V702`} stroke="#00ff00" />
      <Dot x={all} y={418} /><Dot x={all} y={700} />
      {rows.map(([y, t, cy, d], i) => (
        <g key={y}>
          <path d={t ? `M${near} ${y + 0.5}H${far}L${edge} ${cy < y - 3 ? y - 2 : cy > y + 3 ? y + 3 : y + 0.5}` : `M${short} ${y + 0.5}H${i === 9 ? all : dim}`} stroke="#00ff00" fill="none" />
          <Dot x={dim} y={y} />
          {t && <Bubble x={cx} y={cy} t={t} />}
          {d && <text transform={`translate(${dim - 2} ${(y + rows[i + 1][0]) / 2}) rotate(-90)`} {...dimText}>{d}</text>}
        </g>
      ))}
      <text transform={`translate(${all - 2} 559) rotate(-90)`} {...dimText}>13000</text>
    </g>
  );
}

function Plan() {
  return (
    <svg viewBox="483 214 1436 828" className="absolute inset-0 h-full w-full" fontFamily="Liberation Sans, sans-serif" role="img" aria-label="标准层平面图">
      <g stroke="#a3a3a3" strokeDasharray="11 4 2 4">
        {topDash.map(([x, y]) => <path key={x} d={`M${x + 0.5} 375V${y}`} />)}
        {bottom.map(([x]) => <path key={x} d={`M${x + 0.5} ${x < 800 || x > 1520 ? 692 : 703}V744`} />)}
        {rows.map(([y], i) => <path key={y} d={`M661 ${y + 0.5}H${leftEnd[i]}M${rightStart[i]} ${y + 0.5}H1681`} />)}
      </g>
      <path d="M905 418H1437V457H1504V514H1638V690H1499V701H843V690H704V514H838V457H905Z" fill="#e8f6fe" />
      <g stroke="#000" strokeWidth={1}>
        {walls.map(([a, b, c, d, k], i) => <rect key={i} x={a + 0.5} y={b + 0.5} width={c - a} height={d - b} fill={colors[k]} />)}
      </g>
      <HorizontalAxis data={top} up />
      <HorizontalAxis data={bottom} up={false} />
      <VerticalAxis left />
      <VerticalAxis left={false} />
      <path d="M537 614V659" stroke="#1fcba6" strokeWidth={2} />
      <path d="M537 659.500H583" stroke="#ff2020" strokeWidth={2} />
      <g fontSize={15} fill="#6f6f6f" textAnchor="middle"><text x={537} y={606}>Y</text><text x={537} y={665}>Z</text><text x={595} y={665}>X</text></g>
      <g>
        <path d="M1752 309H1828V385H1752Z" fill="#dedede" />
        <path d="M1767 309H1813L1828 323V371L1813 385H1767L1752 371V323Z" fill="#e9e9e9" />
        <text x={1790} y={361} textAnchor="middle" fontSize={36} fill="#8e8e8e" fontFamily="'Noto Sans CJK SC', sans-serif" fontWeight={300}>上</text>
      </g>
    </svg>
  );
}

/* ---------- command row ---------- */

const Grip = () => <span className="h-[18px] w-0 border-l-2 border-dotted border-[#b5b5b5]" />;
const toolIcons: Record<string, React.ReactNode> = {
  slab: <Svg s={26}><path d="M9 6H25L17 17H1ZM1 17V20H17V17M17 20L25 9V6" strokeWidth={1.6} /></Svg>,
  steel: <Svg s={26}><path d="M1 8L10 2H25L16 8ZM1 8V11H6V17H1V20L4 23H16V20L13 17H11V11H16V8M16 11L25 5V2M12 11L20 9V13L12 17M16 20L25 14V11H21M16 23L25 17V14" strokeWidth={1.6} /></Svg>,
  col: <Svg s={26}><path d="M8 4L11 1H19V22L16 25H8ZM8 4H16V25M16 4L19 1" strokeWidth={1.6} /></Svg>,
  wall: <Svg s={26}><path d="M2 5L5 2L24 6V23L21 25L2 19ZM2 5L21 9V25M21 9L24 6" strokeWidth={1.6} /></Svg>,
  emb: <Svg s={26}><rect x="1" y="1" width="24" height="24" strokeWidth={1.6} /><g stroke={T}><circle cx="8" cy="9" r="2" /><circle cx="17" cy="9" r="2" /><circle cx="8" cy="17" r="2" /><circle cx="17" cy="17" r="2" /></g></Svg>,
  box: <Svg s={26}><rect x="1" y="1" width="24" height="24" strokeWidth={1.6} /><rect x="4" y="4" width="18" height="18" stroke={T} /><path d="M7 9H11M11 7V12M15 8L18 12M8 15L11 17M14 15V19" /></Svg>,
};

function ToolButton({ icon }: { icon: string }) {
  return <button type="button" aria-label={icon} className="flex size-[37px] shrink-0 items-center justify-center border border-[#2f8b7c] bg-[#c2dcd7]">{toolIcons[icon]}</button>;
}

function CommandRow() {
  return (
    <div className="flex h-11 shrink-0 items-center border-t border-[#c6c6c6] bg-white">
      <div className="flex h-full flex-1 items-center pl-[3px]">
        <Grip />
        <input aria-label="命令" placeholder="在此输入命令" className="ml-[13px] w-full bg-transparent text-lg leading-6 outline-none placeholder:text-[#777]" />
      </div>
      <div className="flex h-[30px] w-[51px] items-center justify-center border-l border-[#ccc]">
        <button type="button" aria-label="展开"><svg width="14" height="10" fill="none" stroke="#447695" strokeWidth="2.400" aria-hidden="true"><path d="M2 8L7 3L12 8" /></svg></button>
      </div>
      <Grip />
      <div className="ml-1 flex w-[422px] items-center gap-0.5 overflow-hidden">
        {[0, 1, 2, 3, 4].map((i) => <ToolButton key={i} icon="slab" />)}
        <span className="mx-1 h-[30px] w-px shrink-0 bg-[#ccc]" />
        {["slab", "steel", "col", "wall", "emb", "box"].map((i) => <ToolButton key={i} icon={i} />)}
      </div>
      <span className="ml-1.5" /><Grip />
      <button type="button" aria-label="导入PM" className="ml-3 w-[23px] overflow-hidden">
        <Svg s={24}>
          <path d="M1 23V1H14L20 7V12M14 1V7H20M1 23H17" strokeWidth={1.6} /><rect x="0" y="9" width="19" height="8" fill="#929292" stroke="none" />
          <text x="9" y="16" fontSize="8" textAnchor="middle" fill="#fff" stroke="none" fontFamily="Liberation Sans, sans-serif">PM</text><path d="M17 17H22L20 23Z" fill={T} stroke="none" />
        </Svg>
      </button>
    </div>
  );
}

/* ---------- status toolbar ---------- */

const cube = "M12 1L21 6V18L12 23L3 18V6Z";
const st: Record<string, React.ReactNode> = {
  folder: <Svg s={24}><path d="M1 1H10L12 5H23V23H1Z" fill="#d8f1f4" stroke={N} strokeWidth={1.8} /><path d="M12 1H23V4H12Z" fill={C} stroke={N} /></Svg>,
  panes: <Svg s={24}><path d="M4 1H1V5M20 1H23V5M4 23H1V19M20 23H23V19" stroke={N} strokeWidth={1.6} /><path d="M4 4H10V20H4ZM14 4H20V20H14Z" fill="#d8f1f4" stroke={N} strokeWidth={1.6} /></Svg>,
  addWin: <Svg s={24}><path d="M12 22H1V1H23V11M1 7H23" stroke={N} strokeWidth={1.8} /><path d="M4 4H6M8 4H10" stroke={C} strokeWidth={2} /><path d="M19 13V23M14 18H24" stroke={C} strokeWidth={2} /></Svg>,
  fit: <Svg s={24}><path d="M7 1H1V7M17 1H23V7M7 23H1V17M17 23H23V17" stroke={N} strokeWidth={1.8} /><circle cx="12" cy="12" r="8" fill="#d8f1f4" stroke="none" /><path d="M12 4V20M4 12H20" stroke={N} strokeWidth={3} /></Svg>,
  hand: <Svg s={24}><path d="M8 15V5C8 2 11 2 11 5V11V3C11 0 15 0 15 3V11V4C15 2 19 2 19 5V12V7C19 5 23 5 23 8V16C23 21 20 23 15 23C9 23 7 20 1 13C1 10 4 11 8 15Z" fill="#fff" stroke={N} strokeWidth={1.6} /></Svg>,
  orbit: <Svg s={24}><path d="M9 8C11 -1 16 1 16 10C16 20 12 26 9 18M6 9C-2 12 0 17 8 17C18 17 27 13 20 10L14 9" stroke={N} strokeWidth={1.6} /><path d="M6 6L10 9L6 12M9 22L8 17L13 18" stroke={C} strokeWidth={1.6} /></Svg>,
  zoom: <Svg s={24}><circle cx="9" cy="9" r="8" fill="#e2f5f7" stroke={N} strokeWidth={1.6} /><path d="M15 15L23 23" stroke={N} strokeWidth={2} /><path d="M9 4V6M9 12V14M4 9H6M12 9H14" stroke={C} strokeWidth={2} /></Svg>,
  cube1: <Svg s={24}><path d={cube + "M3 6L12 11L21 6M12 11V23"} fill="#fff" stroke={N} strokeWidth={1.5} /></Svg>,
  cube2: <Svg s={24}><path d={cube + "M3 6L21 18M21 6L3 18M12 1V23"} fill="#d8f1f4" stroke={N} strokeWidth={1.5} /></Svg>,
  cube3: <Svg s={24}><path d="M3 6L12 1L21 6L12 11Z" fill="#e4f1f2" stroke="none" /><path d="M12 11L21 6V18L12 23Z" fill="#9fc0c8" stroke="none" /><path d={cube + "M3 6L12 11L21 6M12 11V23"} stroke={N} strokeWidth={1.5} /></Svg>,
  cube4: <Svg s={24}><path d={cube} fill="#dff1f4" stroke="none" /><path d="M3 6L12 11V23L3 18Z" fill="#8ebfd0" stroke="none" /><path d={cube + "M3 6L12 11L21 6M12 11V23"} stroke="#4d86a5" strokeWidth={1.5} /></Svg>,
  cube5: <Svg s={24}><path d={cube} fill="#e8f7f8" stroke="none" /><path d="M12 11L21 6V18L12 23Z" fill="#c5dfe1" stroke="none" /><path d="M3 6L12 11V23L3 18Z" fill="#a9cbce" stroke="none" /></Svg>,
  lines: <Svg s={24}><path d="M1 2H13M1 10H9M1 18H6" stroke={N} strokeWidth={1.8} /><path d="M22 1L7 23" stroke={N} strokeWidth={1.6} /><path d="M18 9H24M15 15H24M12 21H24M21 3H24" stroke={C} strokeWidth={3} /></Svg>,
  up: <Svg s={24}><path d="M6 11L12 5L18 11M6 18L12 12L18 18" stroke={N} strokeWidth={2} /></Svg>,
  snap: <Svg s={24}><path d="M9 5H23V23H5V9" stroke={N} strokeWidth={2} /><rect x="1" y="1" width="8" height="8" fill="#fff" stroke={C} strokeWidth={1.6} /></Svg>,
  ang1: <Svg s={24}><path d="M1 23H24M1 23L9 15" stroke={N} strokeWidth={2} /><path d="M13 11L24 1" stroke={N} strokeDasharray="3 2" /><circle cx="11" cy="13" r="3.500" stroke={N} /></Svg>,
  ang2: <Svg s={24}><path d="M2 1L8 16L10 23" stroke={N} strokeWidth={1.6} strokeDasharray="7 1" /><path d="M12 23H24" stroke={N} strokeDasharray="3 2" strokeWidth={1.6} /><circle cx="10" cy="19" r="3.500" fill="#d8f1f4" stroke={N} /></Svg>,
  ortho: <Svg s={24}><path d="M1 1V23H24" stroke={N} strokeWidth={2} /><path d="M2 14H9V22" stroke={C} strokeWidth={1.8} /></Svg>,
  grid: <Svg s={24}><path d="M1 1H23V23H1ZM1 7H23M1 12H23M1 18H23M7 1V23M12 1V23M18 1V23" stroke={N} strokeWidth={1.6} /></Svg>,
  rotate: <Svg s={24}><path d="M5 7L12 1L19 7M5 14L12 21L19 14" stroke="#9db4c0" strokeWidth={1.8} /><path d="M0 14L2 8L7 11ZM24 14L22 8L17 11Z" fill={N} stroke={N} /><circle cx="12" cy="11" r="2.500" stroke={N} strokeWidth={1.6} /><path d="M8 19H16L12 24Z" fill={N} stroke="none" /></Svg>,
  gear: <Svg s={24}><path d="M10 1H14L15 4L18 6L21 5L23 9L21 11V13L23 16L21 19L18 18L15 20L14 23H10L9 20L6 18L3 19L1 16L3 13V11L1 9L3 5L6 6L9 4Z" fill="#9fdde0" stroke="#2a7390" strokeWidth={1.4} /><circle cx="12" cy="12" r="4" fill="#f1f1f1" stroke="#2a7390" strokeWidth={1.4} /></Svg>,
};

function St({ icon, on }: { icon: string; on?: boolean }) {
  return <button type="button" aria-label={icon} aria-pressed={!!on} className={`flex size-[30px] items-center justify-center ${on ? "border border-[#2f8b7c] bg-[#c2dcd7]" : ""}`}>{st[icon]}</button>;
}
const StSep = () => <span className="mr-px h-[30px] w-px bg-[#c9c9c9]" />;

function StatusBar() {
  return (
    <footer className="shrink-0 bg-[#f1f1f1]">
      <div className="flex h-[42px] border-t border-[#bdbdbd]">
        <div className="flex items-start gap-[9px] pt-0.5 pl-2">
          {["folder", "panes", "addWin"].map((i) => <St key={i} icon={i} />)}
          <StSep />
          {["fit", "hand", "orbit", "zoom"].map((i) => <St key={i} icon={i} />)}
          <StSep />
          {["cube1", "cube2", "cube3", "cube4", "cube5"].map((i) => <St key={i} icon={i} on={i === "cube3"} />)}
          <StSep />
          <St icon="lines" /><St icon="up" />
          <StSep />
          <button type="button" aria-label="缩小" className="ml-2 h-[27px]"><svg width="14" height="14" stroke="#a5a5a5" strokeWidth="2" aria-hidden="true"><path d="M1 7H13" /></svg></button>
          <input type="range" aria-label="缩放" defaultValue={55} className="mx-1.5 h-[27px] w-[90px] appearance-none bg-transparent [&::-webkit-slider-runnable-track]:h-px [&::-webkit-slider-runnable-track]:bg-[#a8a8a8] [&::-webkit-slider-thumb]:-mt-3 [&::-webkit-slider-thumb]:h-6 [&::-webkit-slider-thumb]:w-1.5 [&::-webkit-slider-thumb]:appearance-none [&::-webkit-slider-thumb]:border [&::-webkit-slider-thumb]:border-[#9c9c9c] [&::-webkit-slider-thumb]:bg-[#e8e8e8]" />
          <button type="button" aria-label="放大" className="h-[27px]"><svg width="14" height="14" stroke="#a5a5a5" strokeWidth="2" aria-hidden="true"><path d="M1 7H13M7 1V13" /></svg></button>
        </div>
        <div className="ml-auto flex items-start gap-[9px] pt-[5px] pr-3">
          <div className="mr-0.5 flex">
            <St icon="snap" on />
            <button type="button" aria-label="捕捉选项"><svg width="8" height="30" fill="none" stroke="#555" aria-hidden="true"><path d="M1 17L4 13L7 17" /></svg></button>
          </div>
          {["ang1", "ang2", "ortho", "grid", "rotate", "gear"].map((i) => <St key={i} icon={i} on={i.startsWith("ang")} />)}
        </div>
      </div>
      <div className="h-0.5 bg-[#cbc6c6]" />
      <div className="h-[3px] bg-[#e5dada]" />
    </footer>
  );
}

const note = "pointer-events-none absolute z-10 whitespace-nowrap text-[31px] leading-10 text-[#ff1c0e]";

export default function App() {
  return (
    <div className="flex h-screen flex-col overflow-hidden bg-[#eeeeee] font-['Noto_Sans','Noto_Sans_CJK_SC',sans-serif] font-normal">
      <TitleBar />
      <TabBar />
      <Ribbon />
      <div className="flex min-h-0 flex-1">
        <Browser />
        <div className="relative flex min-w-0 flex-1 flex-col border-l-[3px] border-[#d6d6d6]">
          <main className="relative flex-1 border-r border-[#cfcfcf] bg-white">
            <Plan />
            <div role="tooltip" className="absolute top-[665px] left-[584px] rounded border border-[#dcdcdc] bg-[#f9f9f9] px-[5px] py-px text-lg leading-[26px] text-[#555] shadow-[3px_3px_2px_#888]">截图 Shift+Alt+A</div>
          </main>
          <CommandRow />
          <p className={`${note} -top-[22px] left-[429px]`}>菜单模块</p>
          <p className={`${note} top-[158px] left-[664px]`}>绘图区</p>
          <p className={`${note} bottom-[47px] left-[37px]`}>状态显示区</p>
          <p className={`${note} -bottom-1 left-[137px]`}>命令区</p>
          <p className={`${note} right-[122px] bottom-[37px]`}>常用工具栏</p>
        </div>
      </div>
      <StatusBar />
    </div>
  );
}
